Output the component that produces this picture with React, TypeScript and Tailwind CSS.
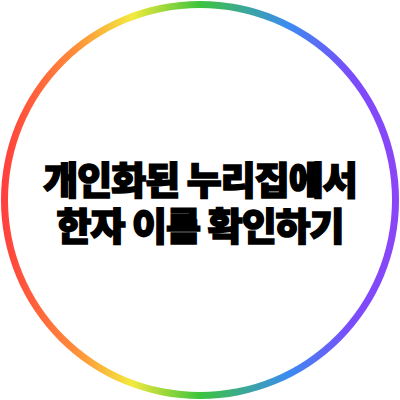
export default function App() {
  return (
    <div className="w-[400px] h-[400px] bg-white flex items-center justify-center">
      <div className="w-[398px] h-[398px] rounded-full p-[7px] [background-image:linear-gradient(90deg,#ff3d3d_0%,#ff8a3a_18%,#f3ea3e_33%,#3cc43c_50%,#3b8cf0_72%,#7a4cfb_88%,#8b45f7_100%)]">
        <div className="w-full h-full rounded-full bg-white flex items-center justify-center">
          <h1 className="text-center text-black font-black text-[38px] leading-[46px] tracking-[-1px] [-webkit-text-stroke:1.6px_black] font-['Noto_Sans_CJK_KR',sans-serif] pt-[2px]">
            개인화된 누리집에서
            <br />
            한자 이름 확인하기
          </h1>
        </div>
      </div>
    </div>
  );
}
